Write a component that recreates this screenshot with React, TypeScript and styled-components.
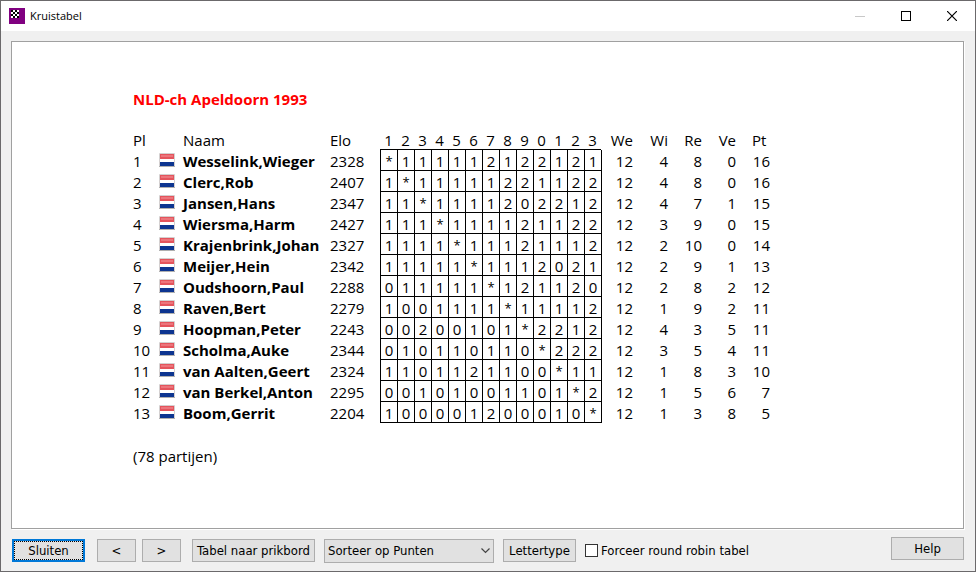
import React from 'react';
import styled, { createGlobalStyle, css } from 'styled-components';

const GlobalStyle = createGlobalStyle`
  * { box-sizing: border-box; }
  html, body { margin: 0; padding: 0; }
  button, select, input { margin: 0; font: inherit; color: inherit; }
`;

const Window = styled.div`
  display: flex;
  flex-direction: column;
  height: 100vh;
  border: 1px solid #6b696b;
  background: #f0f0f0;
  color: #000;
  font: 13px/16px 'DejaVu Sans Condensed', 'DejaVu Sans', sans-serif;
  font-stretch: condensed;
`;

const TitleBar = styled.header`
  display: flex;
  align-items: center;
  height: 30px;
  flex: none;
  padding-left: 8px;
  background: #fff;
`;

const Title = styled.h1`
  flex: 1;
  margin: 0 0 0 5px;
  font: 11px/16px 'Open Sans', sans-serif;
`;

const CaptionButton = styled.button<{ $dim?: boolean }>`
  display: flex;
  align-items: center;
  justify-content: center;
  width: 46px;
  height: 28px;
  padding: 0;
  border: 0;
  background: transparent;
  color: ${(p) => (p.$dim ? '#c8c8c8' : '#000')};
`;

const Sheet = styled.main`
  flex: 1;
  min-height: 0;
  margin: 10px 11px 0 10px;
  padding: 47px 20px 20px 121px;
  border: 1px solid #a0a0a0;
  box-shadow: 1px 1px 0 #fff;
  background: #fff;
  overflow: hidden;
  font: 15px/21px 'Open Sans', sans-serif;
`;

const EventName = styled.h2`
  margin: 0 0 20px;
  font: inherit;
  font-weight: 700;
  color: #f00;
`;

const CrossTable = styled.table`
  table-layout: fixed;
  width: 637px;
  border-collapse: separate;
  border-spacing: 0;
`;

const Col = styled.col<{ $w: number }>`
  width: ${(p) => p.$w}px;
`;

const cell = css<{ $right?: boolean }>`
  padding: 0;
  line-height: 18px;
  white-space: nowrap;
  vertical-align: top;
  text-align: ${(p) => (p.$right ? 'right' : 'left')};
  font-weight: 400;
`;

const Head = styled.th`
  ${cell}
  height: 20px;
  padding-top: 1px;
`;

const PtHead = styled(Head)`
  padding-left: 16px;
`;

const ScoreHead = styled(Head)`
  text-align: center;
  border-bottom: 1px solid #000;
`;

const Cell = styled.td`
  ${cell}
  height: 21px;
  padding-top: 2px;
`;

const NameCell = styled(Cell)`
  font-weight: 700;
`;

const Score = styled(Cell)<{ $self?: boolean }>`
  text-align: center;
  font-size: ${(p) => (p.$self ? 13 : 15)}px;
  border-left: 1px solid #000;
  border-bottom: 1px solid #000;
`;

const EdgeCell = styled(Cell)`
  border-left: 1px solid #000;
`;

const FlagIcon = styled.svg`
  display: block;
  margin-top: 1px;
`;

const Summary = styled.p`
  margin: 23px 0 0;
`;

const BottomBar = styled.footer`
  display: flex;
  align-items: center;
  flex: none;
  height: 42px;
  padding: 1px 11px 0 11px;
`;

const PushButton = styled.button<{ $w: number; $default?: boolean; $gap?: number }>`
  width: ${(p) => p.$w}px;
  height: 23px;
  margin-right: ${(p) => p.$gap ?? 0}px;
  padding: 0;
  border: ${(p) => (p.$default ? '2px solid #0078d7' : '1px solid #adadad')};
  outline: ${(p) => (p.$default ? '1px dotted #000' : 'none')};
  outline-offset: -3px;
  background: #e1e1e1;
  white-space: nowrap;
`;

const SelectWrap = styled.div`
  display: flex;
  align-items: center;
  position: relative;
  width: 170px;
  margin-right: 9px;
`;

const Select = styled.select`
  appearance: none;
  width: 100%;
  height: 24px;
  padding: 0 20px 0 3px;
  border: 1px solid #adadad;
  border-radius: 0;
  background: #e1e1e1;
`;

const Chevron = styled.svg`
  position: absolute;
  right: 4px;
  pointer-events: none;
`;

const CheckLabel = styled.label`
  display: flex;
  align-items: center;
  gap: 3px;
`;

const CheckBox = styled.input`
  appearance: none;
  width: 13px;
  height: 13px;
  border: 1px solid #333;
  background: #fff;
  &:checked { background: #0078d7; }
`;

const HelpSlot = styled.div`
  align-self: flex-start;
  margin: 7px 0 0 auto;
`;

const AppIcon = () => (
  <svg width="16" height="16" shapeRendering="crispEdges" aria-hidden="true">
    <rect width="16" height="16" fill="#800080" />
    <rect x="2" y="2" width="8" height="8" fill="#fff" />
    {[0, 1, 2, 3].flatMap((r) =>
      [0, 1, 2, 3].filter((c) => (r + c) % 2 === 0).map((c) => (
        <rect key={`${r}${c}`} x={2 + c * 2} y={2 + r * 2} width="2" height="2" fill="#000" />
      )),
    )}
  </svg>
);

const Flag = () => (
  <FlagIcon width="16" height="14" role="img" aria-label="NLD">
    <rect x="0" y="0" width="16" height="14" rx="1" fill="#d4d0d0" />
    <rect x="1" y="1" width="14" height="5" fill="#e4545c" />
    <rect x="2" y="2" width="12" height="2" fill="#ec757c" />
    <rect x="1" y="6" width="14" height="3" fill="#fff" />
    <rect x="1" y="9" width="14" height="4" fill="#0d3590" />
    <rect x="0" y="13" width="16" height="1" fill="#b0b0b0" />
  </FlagIcon>
);

type Player = [name: string, elo: number, scores: string, we: number, wi: number, re: number, ve: number, pt: number];

const players: Player[] = [
  ['Wesselink,Wieger', 2328, '*111112122121', 12, 4, 8, 0, 16],
  ['Clerc,Rob', 2407, '1*11111221122', 12, 4, 8, 0, 16],
  ['Jansen,Hans', 2347, '11*1111202212', 12, 4, 7, 1, 15],
  ['Wiersma,Harm', 2427, '111*111121122', 12, 3, 9, 0, 15],
  ['Krajenbrink,Johan', 2327, '1111*11121112', 12, 2, 10, 0, 14],
  ['Meijer,Hein', 2342, '11111*1112021', 12, 2, 9, 1, 13],
  ['Oudshoorn,Paul', 2288, '011111*121120', 12, 2, 8, 2, 12],
  ['Raven,Bert', 2279, '1001111*11112', 12, 1, 9, 2, 11],
  ['Hoopman,Peter', 2243, '00200101*2212', 12, 4, 3, 5, 11],
  ['Scholma,Auke', 2344, '010110110*222', 12, 3, 5, 4, 11],
  ['van Aalten,Geert', 2324, '1101121100*11', 12, 1, 8, 3, 10],
  ['van Berkel,Anton', 2295, '00101001101*2', 12, 1, 5, 6, 7],
  ['Boom,Gerrit', 2204, '100001200010*', 12, 1, 3, 8, 5],
];

const rounds = '1234567890123'.split('');

export default function App() {
  return (
    <>
      <GlobalStyle />
      <Window>
        <TitleBar>
          <AppIcon />
          <Title>Kruistabel</Title>
          <CaptionButton $dim disabled aria-label="Minimaliseren">
            <svg width="10" height="10" shapeRendering="crispEdges"><path d="M0 5.5H10" stroke="currentColor" /></svg>
          </CaptionButton>
          <CaptionButton aria-label="Maximaliseren">
            <svg width="10" height="10" shapeRendering="crispEdges"><path d="M.5 .5H9.5V9.5H.5Z" fill="none" stroke="currentColor" /></svg>
          </CaptionButton>
          <CaptionButton aria-label="Venster sluiten">
            <svg width="10" height="10"><path d="M0 0L10 10M10 0L0 10" stroke="currentColor" strokeWidth="1.2" /></svg>
          </CaptionButton>
        </TitleBar>
        <Sheet>
          <EventName>NLD-ch Apeldoorn 1993</EventName>
          <CrossTable>
            <colgroup>
              <Col $w={26} /><Col $w={24} /><Col $w={147} /><Col $w={50} />
              {rounds.map((_, i) => <Col key={i} $w={17} />)}
              <Col $w={32} /><Col $w={35} /><Col $w={34} /><Col $w={34} /><Col $w={34} />
            </colgroup>
            <thead>
              <tr>
                <Head>Pl</Head><Head /><Head>Naam</Head><Head>Elo</Head>
                {rounds.map((r, i) => <ScoreHead key={i}>{r}</ScoreHead>)}
                <Head $right>We</Head><Head $right>Wi</Head><Head $right>Re</Head><Head $right>Ve</Head>
                <PtHead>Pt</PtHead>
              </tr>
            </thead>
            <tbody>
              {players.map(([name, elo, scores, we, wi, re, ve, pt], i) => (
                <tr key={name}>
                  <Cell>{i + 1}</Cell>
                  <Cell><Flag /></Cell>
                  <NameCell>{name}</NameCell>
                  <Cell>{elo}</Cell>
                  {scores.split('').map((s, j) => <Score key={j} $self={s === '*'}>{s}</Score>)}
                  <EdgeCell $right>{we}</EdgeCell>
                  <Cell $right>{wi}</Cell>
                  <Cell $right>{re}</Cell>
                  <Cell $right>{ve}</Cell>
                  <Cell $right>{pt}</Cell>
                </tr>
              ))}
            </tbody>
          </CrossTable>
          <Summary>(78 partijen)</Summary>
        </Sheet>
        <BottomBar>
          <PushButton $w={73} $default $gap={12}>Sluiten</PushButton>
          <PushButton $w={39} $gap={6}>&lt;</PushButton>
          <PushButton $w={39} $gap={11}>&gt;</PushButton>
          <PushButton $w={123} $gap={9}>Tabel naar prikbord</PushButton>
          <SelectWrap>
            <Select aria-label="Sorteren" defaultValue="punten">
              <option value="punten">Sorteer op Punten</option>
            </Select>
            <Chevron width="9" height="6"><path d="M.5 .5L4.5 4.5L8.5 .5" fill="none" stroke="#444" strokeWidth="1.2" /></Chevron>
          </SelectWrap>
          <PushButton $w={73} $gap={9}>Lettertype</PushButton>
          <CheckLabel><CheckBox type="checkbox" />Forceer round robin tabel</CheckLabel>
          <HelpSlot><PushButton $w={73}>Help</PushButton></HelpSlot>
        </BottomBar>
      </Window>
    </>
  );
}
